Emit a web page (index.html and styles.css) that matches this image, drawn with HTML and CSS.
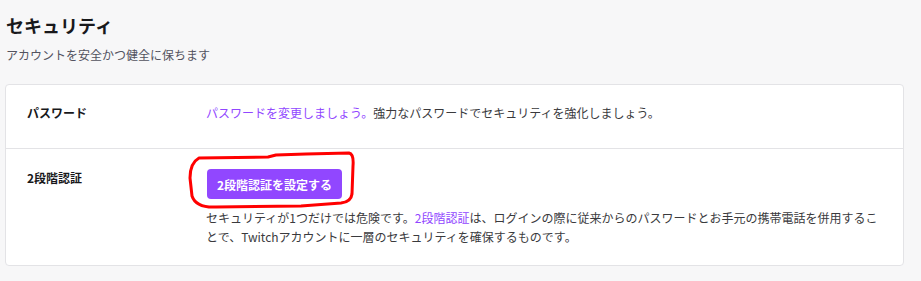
FILE: index.html
```html
<!DOCTYPE html>
<html lang="ja">
<head>
  <meta charset="UTF-8" />
  <meta name="viewport" content="width=device-width, initial-scale=1.0"/>
  <title>セキュリティ</title>
  <link rel="stylesheet" href="styles.css">
</head>
<body>
  <div class="page">
    <div class="header">
      <h2 class="title">セキュリティ</h2>
      <p class="subtitle">アカウントを安全かつ健全に保ちます</p>
    </div>

    <div class="card">
      <div class="row row-password">
        <div class="label">パスワード</div>
        <div class="content">
          <p class="desc"><a href="#" class="link">パスワードを変更しましょう。</a>強力なパスワードでセキュリティを強化しましょう。</p>
        </div>
      </div>
      <div class="row row-2fa">
        <div class="label">2段階認証</div>
        <div class="content">
          <button class="btn-primary">2段階認証を設定する</button>
          <p class="desc">セキュリティが1つだけでは危険です。<a href="#" class="link">2段階認証</a>は、ログインの際に従来からのパスワードとお手元の携帯電話を併用することで、Twitchアカウントに一層のセキュリティを確保するものです。</p>
        </div>
      </div>
    </div>
  </div>

  <!-- red marker drawn over the screenshot -->
  <svg class="marker" width="921" height="281" viewBox="0 0 921 281">
    <path d="M199 158 L268 157 L276 155 L306 154 L349 153 Q354 154 353 166 L352 194 Q351 202 341 203 L301 206 L216 207 Q196 208 192 196 L190 178 Q190 163 199 158 Z"
          fill="none" stroke="#ff0000" stroke-width="3" stroke-linejoin="round"/>
  </svg>
</body>
</html>
```

FILE: styles.css
```css
body {
  margin: 0;
  background-color: #f7f7f8;
  color: #0e0e10;
  font-family: "Noto Sans CJK JP", "Noto Sans", sans-serif;
  font-size: 12px;
}

.page {
  width: 899px;
  padding: 12px 0 0 5px;
}

.header {
  padding-left: 1px;
}

.title {
  margin: 0;
  font-size: 18px;
  font-weight: 700;
  line-height: 26px;
  color: #18181b;
}

.subtitle {
  margin: 8px 0 0;
  font-size: 12px;
  line-height: 18px;
  color: #53535f;
}

.card {
  margin-top: 20px;
  background-color: #fff;
  border: 1px solid #e3e3e6;
  border-radius: 4px;
}

.row {
  display: flex;
  padding: 0 20px 0 21px;
}

.row-password {
  padding-top: 18px;
  padding-bottom: 25px;
  border-bottom: 1px solid #e3e3e6;
}

.row-2fa {
  padding-top: 19px;
  padding-bottom: 19px;
}

.label {
  width: 179px;
  flex-shrink: 0;
  font-weight: 700;
  line-height: 20px;
  color: #18181b;
}

.content {
  flex: 1;
}

.desc {
  margin: 0;
  line-height: 19px;
  color: #3a3a3d;
}

.link {
  color: #9147ff;
  text-decoration: none;
}

.btn-primary {
  display: block;
  margin: 1px 0 9px 1px;
  height: 30px;
  padding: 0 10px;
  border: none;
  border-radius: 4px;
  background-color: #9147ff;
  color: #fff;
  font-family: inherit;
  font-size: 12px;
  font-weight: 700;
  cursor: pointer;
}

.marker {
  position: absolute;
  top: 0;
  left: 0;
  pointer-events: none;
}
```
